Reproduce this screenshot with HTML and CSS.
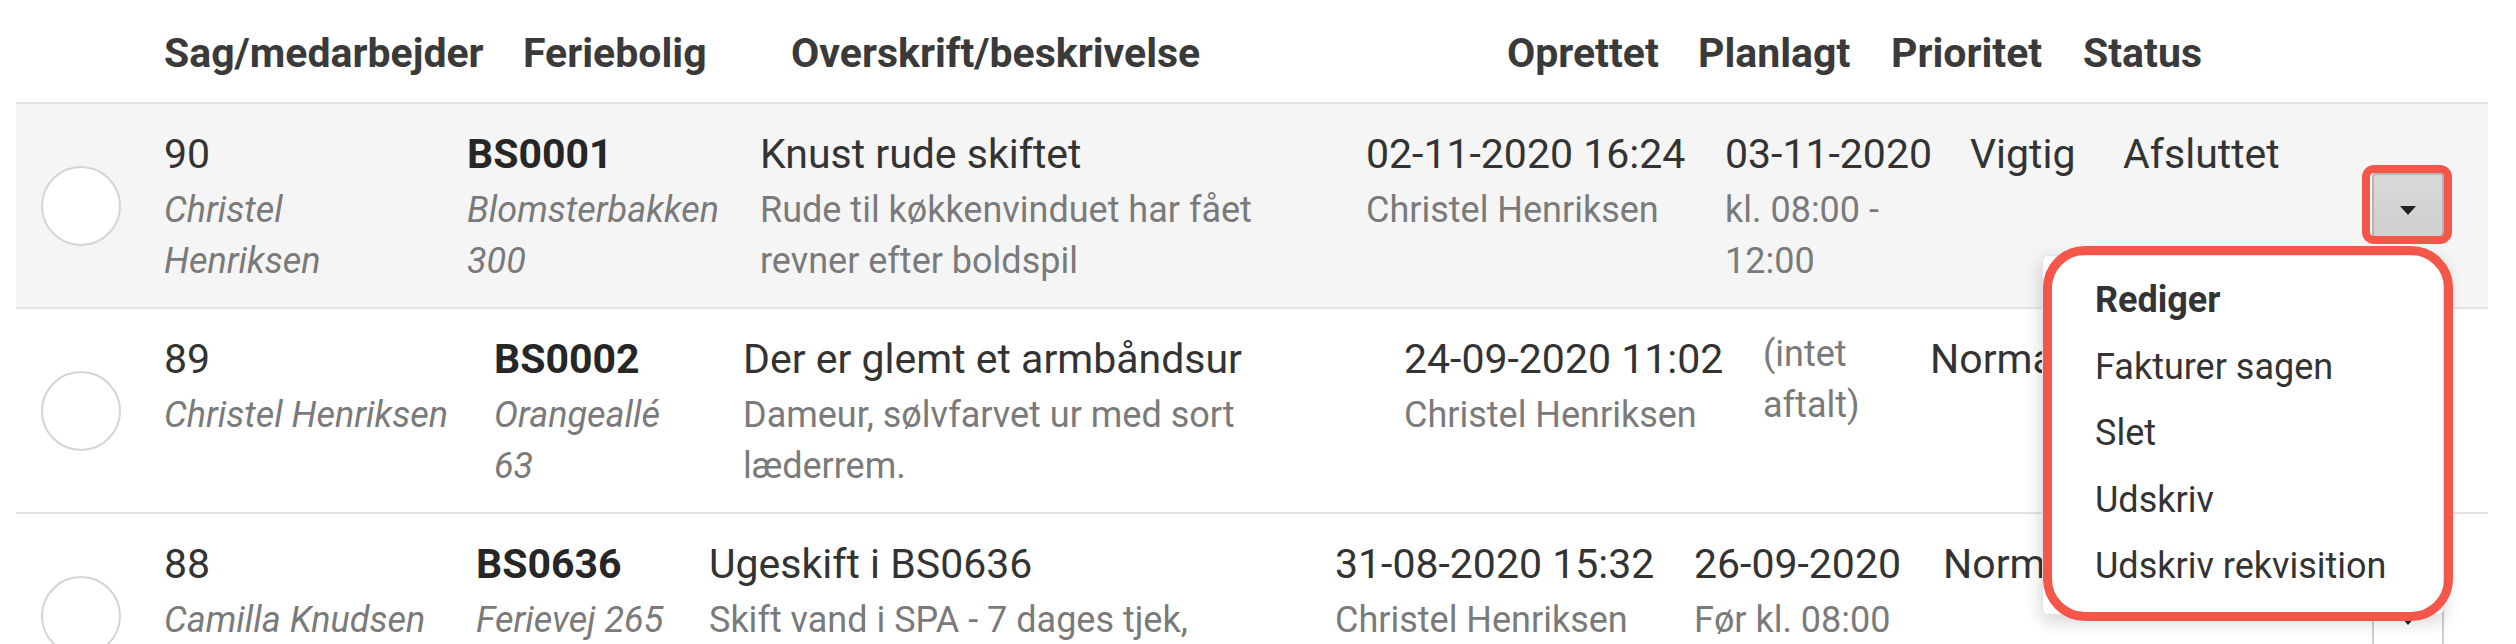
FILE: index.html
```html
<!DOCTYPE html>
<html lang="da">
<head>
  <meta charset="UTF-8">
  <title>Sager</title>
  <link rel="stylesheet" href="styles.css">
</head>
<body>

  <div class="case-list">

    <!-- Kolonneoverskrifter -->
    <div class="list-head">
      <span></span>
      <span>Sag/medarbejder</span>
      <span>Feriebolig</span>
      <span>Overskrift/beskrivelse</span>
      <span>Oprettet</span>
      <span>Planlagt</span>
      <span>Prioritet</span>
      <span>Status</span>
    </div>

    <!-- Sag 90 (aktiv, menu åben) -->
    <div class="case case-90 active">
      <div class="check"><span class="circle"></span></div>
      <div class="cell">
        <div class="main">90</div>
        <div class="sub em">Christel Henriksen</div>
      </div>
      <div class="cell">
        <div class="main code">BS0001</div>
        <div class="sub em">Blomsterbakken 300</div>
      </div>
      <div class="cell">
        <div class="main">Knust rude skiftet</div>
        <div class="sub">Rude til køkkenvinduet har fået revner efter boldspil</div>
      </div>
      <div class="cell">
        <div class="main">02-11-2020 16:24</div>
        <div class="sub">Christel Henriksen</div>
      </div>
      <div class="cell">
        <div class="main">03-11-2020</div>
        <div class="sub">kl. 08:00 - 12:00</div>
      </div>
      <div class="cell">
        <div class="main">Vigtig</div>
      </div>
      <div class="cell">
        <div class="main">Afsluttet</div>
      </div>
      <div class="actions">
        <button class="drop-btn"><span class="caret"></span></button>
        <span class="mark mark-btn"></span>
        <ul class="drop-menu">
          <li class="strong">Rediger</li>
          <li>Fakturer sagen</li>
          <li>Slet</li>
          <li>Udskriv</li>
          <li>Udskriv rekvisition</li>
        </ul>
        <span class="mark mark-menu"></span>
      </div>
    </div>

    <!-- Sag 89 -->
    <div class="case case-89">
      <div class="check"><span class="circle"></span></div>
      <div class="cell">
        <div class="main">89</div>
        <div class="sub em">Christel Henriksen</div>
      </div>
      <div class="cell">
        <div class="main code">BS0002</div>
        <div class="sub em">Orangeallé 63</div>
      </div>
      <div class="cell">
        <div class="main">Der er glemt et armbåndsur</div>
        <div class="sub">Dameur, sølvfarvet ur med sort læderrem.</div>
      </div>
      <div class="cell">
        <div class="main">24-09-2020 11:02</div>
        <div class="sub">Christel Henriksen</div>
      </div>
      <div class="cell">
        <div class="sub">(intet aftalt)</div>
      </div>
      <div class="cell">
        <div class="main">Normal</div>
      </div>
      <div class="cell">
        <div class="main">Åben</div>
      </div>
      <div class="actions">
        <button class="drop-btn"><span class="caret"></span></button>
      </div>
    </div>

    <!-- Sag 88 -->
    <div class="case case-88">
      <div class="check"><span class="circle"></span></div>
      <div class="cell">
        <div class="main">88</div>
        <div class="sub em">Camilla Knudsen</div>
      </div>
      <div class="cell">
        <div class="main code">BS0636</div>
        <div class="sub em">Ferievej 265</div>
      </div>
      <div class="cell">
        <div class="main">Ugeskift i BS0636</div>
        <div class="sub">Skift vand i SPA - 7 dages tjek, rengøring af filter og dæksel</div>
      </div>
      <div class="cell">
        <div class="main">31-08-2020 15:32</div>
        <div class="sub">Christel Henriksen</div>
      </div>
      <div class="cell">
        <div class="main">26-09-2020</div>
        <div class="sub">Før kl. 08:00</div>
      </div>
      <div class="cell">
        <div class="main">Normal</div>
      </div>
      <div class="cell">
        <div class="main">Åben</div>
      </div>
      <div class="actions">
        <button class="drop-btn"><span class="caret"></span></button>
      </div>
    </div>

  </div>

</body>
</html>
```

FILE: styles.css
```css
* { box-sizing: border-box; margin: 0; padding: 0; }
html, body { overflow: hidden; }
body {
  background: #fff;
  color: #333;
  font-family: Roboto, "Liberation Sans", sans-serif;
}

.case-list {
  margin: 0 28px 0 16px;
}

/* overskrifter */
.list-head {
  display: grid;
  grid-template-columns: 123px 359px 268px 716px 191px 193px 192px 1fr;
  padding: 23px 44px 18px 25px;
  font-size: 41px;
  line-height: 61px;
  font-weight: bold;
  color: #3a3a3a;
  white-space: nowrap;
}

/* rækker */
.case {
  display: grid;
  padding: 20px 44px 20px 25px;
  border-top: 2px solid #e4e4e4;
}
.case.active { background: #f5f5f5; }

.case-90 { grid-template-columns: 123px 303px 293px 606px 359px 245px 153px 1fr 72px; }
.case-89 { grid-template-columns: 123px 330px 249px 661px 359px 167px 153px 1fr 72px; }
.case-88 { grid-template-columns: 123px 312px 233px 626px 359px 249px 153px 1fr 72px; }

.check {
  align-self: center;
}
.circle {
  display: block;
  width: 80px;
  height: 80px;
  border-radius: 50%;
  border: 2px solid #d4d4d4;
  background: #fff;
}

.cell { padding-right: 36px; }
.main {
  font-size: 41px;
  line-height: 61px;
  color: #333;
  white-space: nowrap;
}
.main.code {
  font-weight: bold;
  color: #262626;
}
.sub {
  font-size: 36px;
  line-height: 51px;
  color: #7a7a7a;
}
.sub.em { font-style: italic; }

/* knap + dropdown */
.actions {
  position: relative;
  align-self: center;
  height: 65px;
}
.drop-btn {
  display: flex;
  align-items: center;
  justify-content: center;
  width: 72px;
  height: 65px;
  padding-top: 10px;
  background: #fff;
  border: 2px solid #cfcfcf;
  border-radius: 4px;
}
.active .drop-btn {
  background: linear-gradient(#d9d9d9, #cfcfcf);
  border-color: #b4b4b4;
}
.caret {
  width: 0;
  height: 0;
  border-left: 8px solid transparent;
  border-right: 8px solid transparent;
  border-top: 9px solid #222;
}

.drop-menu {
  position: absolute;
  top: 82px;
  right: 0;
  width: 402px;
  padding: 11px 0 14px;
  list-style: none;
  background: #fff;
  border: 1px solid #e2e2e2;
  border-radius: 6px;
  box-shadow: 0 6px 18px rgba(0, 0, 0, 0.18);
  z-index: 5;
}
.drop-menu li {
  padding: 8px 52px;
  font-size: 36px;
  line-height: 50.5px;
  color: #333;
  white-space: nowrap;
}
.drop-menu li.strong { font-weight: bold; }

/* røde markeringer */
.mark {
  position: absolute;
  border: 8px solid #f5564a;
  z-index: 6;
  pointer-events: none;
}
.mark-btn {
  top: -8px;
  left: -10px;
  right: -8px;
  bottom: -6px;
  border-radius: 12px;
}
.mark-menu {
  top: 73px;
  left: -329px;
  right: -9px;
  height: 375px;
  border-width: 9px;
  border-radius: 42px;
}
```
